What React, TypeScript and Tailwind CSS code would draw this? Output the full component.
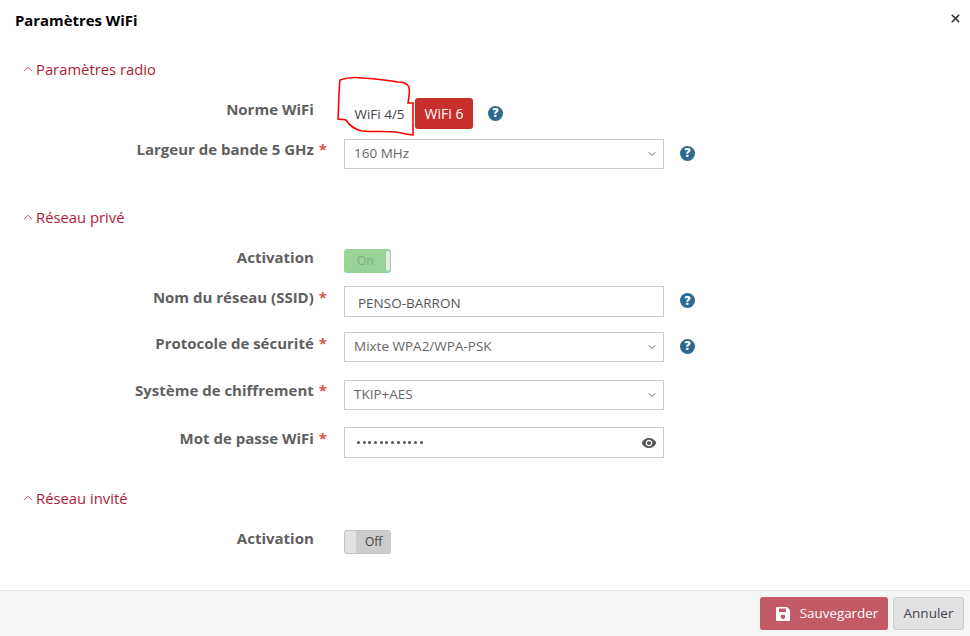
import { ChevronDown, ChevronUp, X } from "lucide-react";

function Help() {
  return (
    <span className="flex h-[15px] w-[15px] -translate-y-[1px] items-center justify-center rounded-full bg-[#2d6a8e] text-[12px] font-extrabold leading-none text-white">
      ?
    </span>
  );
}

function Label({ text, required }: { text: string; required?: boolean }) {
  return (
    <div className="w-[328px] shrink-0 pr-[1px] text-right text-[15px] font-bold leading-5 text-[#5f5f5f]">
      {text}
      {required ? (
        <span className="ml-[5px] text-[#d9534f]">*</span>
      ) : (
        <span className="ml-[5px] text-transparent">*</span>
      )}
    </div>
  );
}

function Select({ value }: { value: string }) {
  return (
    <div className="flex h-[30px] w-[320px] items-center justify-between border border-[#cccccc] pb-[1px] pl-[9px] pr-[4px] text-[13.5px] text-[#666666]">
      <span>{value}</span>
      <ChevronDown size={12} strokeWidth={2} className="mr-[1px] text-[#666666]" />
    </div>
  );
}

function Section({ title }: { title: string }) {
  return (
    <div className="flex items-center gap-[1px] pl-[21px] text-[14.8px] leading-5 text-[#b01c33]">
      <ChevronUp size={14} strokeWidth={1.4} />
      <span>{title}</span>
    </div>
  );
}

export default function App() {
  return (
    <div
      className="relative flex h-[636px] w-[970px] flex-col overflow-hidden bg-white"
      style={{ fontFamily: '"Open Sans", sans-serif' }}
    >
      {/* Header */}
      <div className="flex h-[40px] shrink-0 items-start justify-between pl-[15px] pr-[8px] pt-[10px]">
        <h1 className="text-[14.9px] font-bold leading-5 text-black">Paramètres WiFi</h1>
        <X size={13} strokeWidth={3} className="mt-[2px] text-[#333333]" />
      </div>

      {/* Body */}
      <div className="flex-1">
        <div className="mt-[19px]">
          <Section title="Paramètres radio" />
        </div>

        <div className="mt-[19px] flex items-start">
          <div className="pt-[1px]">
            <Label text="Norme WiFi" />
          </div>
          <div className="ml-[16px] flex items-center">
            <span className="flex h-[32px] w-[71px] items-center justify-center pt-[1px] text-[13.5px] text-[#444444]">
              WiFi 4/5
            </span>
            <span className="flex h-[31px] w-[58px] -translate-y-[1px] items-center justify-center rounded-[3px] bg-[#c62f2b] text-[14px] text-white">
              WiFi 6
            </span>
            <span className="ml-[15px]">
              <Help />
            </span>
          </div>
        </div>

        <div className="mt-[9px] flex items-start">
          <Label text="Largeur de bande 5 GHz" required />
          <div className="ml-[16px] flex items-center">
            <Select value="160 MHz" />
            <span className="ml-[16px]">
              <Help />
            </span>
          </div>
        </div>

        <div className="mt-[38px]">
          <Section title="Réseau privé" />
        </div>

        <div className="mt-[22px] flex items-start">
          <div className="-mt-[2px]">
            <Label text="Activation" />
          </div>
          <div className="ml-[16px] flex h-[24px] w-[47px] items-center justify-between rounded-[3px] bg-[#98d498] pl-[13px] pr-[1px] text-[12px] text-[#7fa97f]">
            <span>On</span>
            <span className="h-[20px] w-[4px] rounded-[2px] bg-[#e8e8e8]" />
          </div>
        </div>

        <div className="mt-[13px] flex items-start">
          <div className="pt-[1px]">
            <Label text="Nom du réseau (SSID)" required />
          </div>
          <div className="ml-[16px] flex items-center">
            <div className="flex h-[31px] w-[320px] items-center border border-[#cccccc] pl-[13px] pt-[3px] text-[13.5px] text-[#555555]">
              PENSO-BARRON
            </div>
            <span className="ml-[16px]">
              <Help />
            </span>
          </div>
        </div>

        <div className="mt-[15px] flex items-start">
          <div className="pt-[1px]">
            <Label text="Protocole de sécurité" required />
          </div>
          <div className="ml-[16px] flex items-center">
            <Select value="Mixte WPA2/WPA-PSK" />
            <span className="ml-[16px]">
              <Help />
            </span>
          </div>
        </div>

        <div className="mt-[18px] flex items-start">
          <Label text="Système de chiffrement" required />
          <div className="ml-[16px]">
            <Select value="TKIP+AES" />
          </div>
        </div>

        <div className="mt-[17px] flex items-start">
          <div className="pt-[1px]">
            <Label text="Mot de passe WiFi" required />
          </div>
          <div className="ml-[16px] flex h-[31px] w-[320px] items-center justify-between border border-[#cccccc] pl-[12px] pr-[6px] text-[13px] text-[#555555]">
            <span className="flex gap-[2.7px]">
              {Array.from({ length: 12 }).map((_, i) => (
                <span key={i} className="h-[3px] w-[3px] rounded-full bg-[#555555]" />
              ))}
            </span>
            <svg width="16" height="16" viewBox="0 0 24 24" fill="#555555" className="mt-[1px]">
              <path d="M12 4.5C7 4.5 2.73 7.61 1 12c1.73 4.39 6 7.5 11 7.5s9.27-3.11 11-7.5c-1.73-4.39-6-7.5-11-7.5zM12 17c-2.76 0-5-2.24-5-5s2.24-5 5-5 5 2.24 5 5-2.24 5-5 5zm0-8c-1.66 0-3 1.34-3 3s1.34 3 3 3 3-1.34 3-3-1.34-3-3-3z" />
            </svg>
          </div>
        </div>

        <div className="mt-[30px]">
          <Section title="Réseau invité" />
        </div>

        <div className="mt-[22px] flex items-start">
          <div className="-mt-[2px]">
            <Label text="Activation" />
          </div>
          <div className="ml-[16px] flex h-[24px] w-[47px] items-center rounded-[3px] border border-[#c4c4c4] bg-[#cccccc] text-[12px] text-[#444444]">
            <span className="h-[22px] w-[11px] rounded-l-[3px] bg-[#e2e2e2]" />
            <span className="ml-[9px]">Off</span>
          </div>
        </div>
      </div>

      {/* Footer */}
      <div className="flex h-[46px] shrink-0 items-center justify-end gap-[5px] border-t border-[#e8e8e8] bg-[#f5f5f5] pr-[6px]">
        <button className="flex h-[33px] w-[128px] items-center justify-center gap-[9px] rounded-[3px] bg-[#c35a66] pl-[5px] text-[13.4px] text-white">
          <svg width="16" height="16" viewBox="0 0 16 16" fill="white">
            <path d="M2 1h10l3 3v10a1 1 0 0 1-1 1H2a1 1 0 0 1-1-1V2a1 1 0 0 1 1-1zm2 1.5V6h7V2.5H4zM8 8.5a2.3 2.3 0 1 0 0 4.6 2.3 2.3 0 0 0 0-4.6z" fillRule="evenodd" />
          </svg>
          Sauvegarder
        </button>
        <button className="h-[33px] w-[71px] rounded-[3px] border border-[#cccccc] bg-[#e2e2e2] text-[13.5px] text-[#444455]">
          Annuler
        </button>
      </div>

      {/* Hand-drawn annotation */}
      <svg className="pointer-events-none absolute left-0 top-0" width="970" height="636" fill="none">
        <path
          d="M340 80 C339 86 339 100 338 119 C342 120 344 119 346 120 C349 125 353 129 362 131 C375 132 385 131 396 132 C402 133 408 135 413 135 C413 125 413 113 413 103 C411 103 409 103 408 103 C409 97 410 92 409 87 C407 83 403 82 398 82 C385 80 375 79 363 78 C355 77 345 78 340 80 Z"
          stroke="#ff0000"
          strokeWidth="1.6"
        />
      </svg>
    </div>
  );
}
